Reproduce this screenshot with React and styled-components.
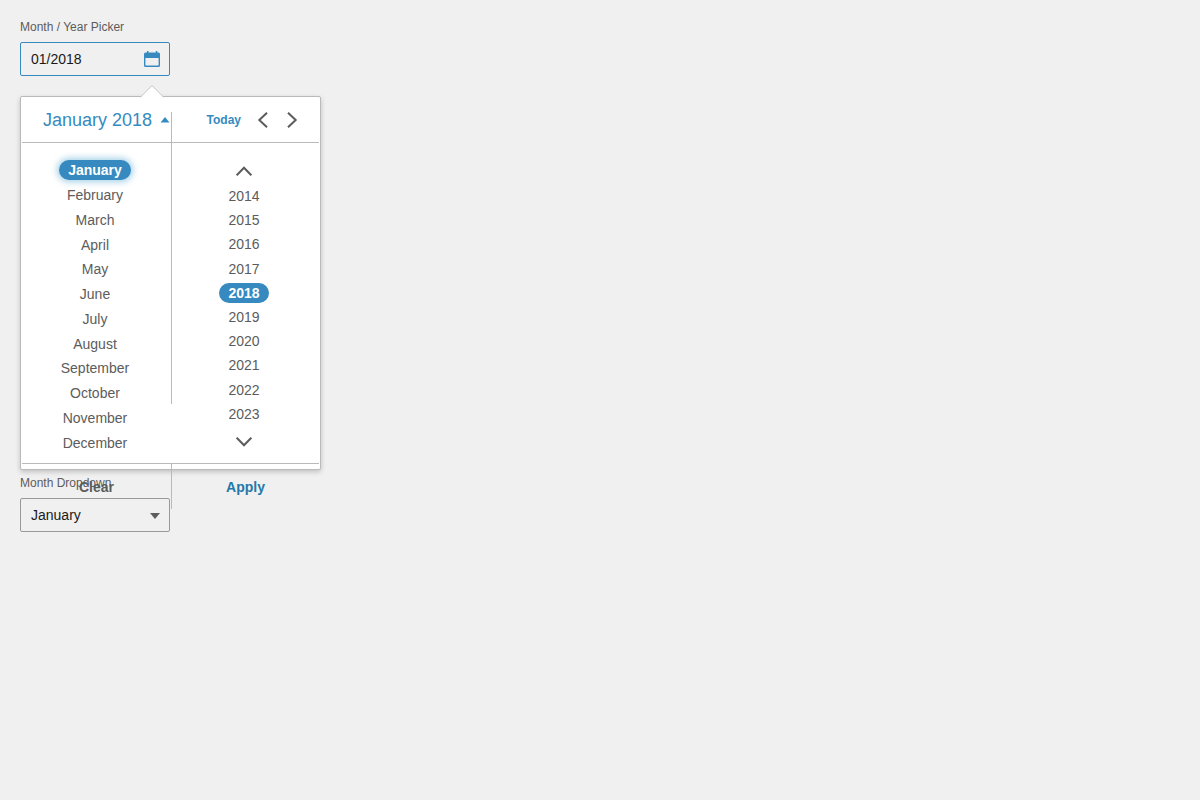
import React, { useState } from "react";
import styled, { createGlobalStyle, css } from "styled-components";

const blue = "#368ac0";
const gray = "#5c5c5c";
const line = "#bababa";

const GlobalStyle = createGlobalStyle`
  *, *::before, *::after { box-sizing: border-box; }
  body {
    margin: 0;
    background: #f0f0f0;
    color: ${gray};
    font-family: "Liberation Sans", Arial, sans-serif;
    font-size: 14px;
  }
  button, input, select { font: inherit; margin: 0; }
`;

const Page = styled.main`
  padding: 20px;
`;

const Field = styled.div`
  display: flex;
  flex-direction: column;
  align-items: flex-start;
  gap: 8px;
`;

const Label = styled.label`
  font-size: 12px;
  line-height: 14px;
`;

const Control = styled.div`
  display: grid;
  width: 150px;
  align-items: center;
  > * { grid-area: 1 / 1; }
`;

const box = css`
  width: 100%;
  height: 34px;
  padding: 0 34px 0 10px;
  border: 1px solid ${(p) => (p.$active ? blue : "#999999")};
  border-radius: 2px;
  background: transparent;
  color: #1a1a1a;
  outline: none;
`;

const TextInput = styled.input`
  ${box}
`;

const Select = styled.select`
  ${box}
  appearance: none;
`;

const Trigger = styled.button`
  justify-self: end;
  display: flex;
  padding: 0;
  margin-right: 9px;
  border: 0;
  background: none;
`;

const SelectArrow = styled.svg`
  justify-self: end;
  margin-right: 10px;
  margin-top: 2px;
  pointer-events: none;
`;

const Popup = styled.section`
  position: relative;
  z-index: 1;
  width: 301px;
  height: 374px;
  margin: 20px 0 6px;
  padding: 0 1px;
  border: 1px solid ${line};
  border-radius: 2px;
  background: #ffffff;
  box-shadow: 0 2px 5px rgba(0, 0, 0, 0.2);
`;

const Tip = styled.svg`
  position: absolute;
  top: -12px;
  left: 119px;
`;

const Divider = styled.span`
  position: absolute;
  top: 15px;
  left: 150px;
  width: 1px;
  height: 292px;
  background: ${line};
`;

const Header = styled.header`
  display: flex;
  align-items: center;
  height: 46px;
  padding: 0 21px;
  border-bottom: 1px solid ${line};
`;

const TitleButton = styled.button`
  display: flex;
  align-items: center;
  gap: 8px;
  padding: 0;
  border: 0;
  background: none;
  color: ${blue};
  font-size: 18px;
  line-height: 22px;
  white-space: nowrap;
`;

const HeaderActions = styled.div`
  display: flex;
  align-items: center;
  gap: 16px;
  margin-left: auto;
`;

const TodayButton = styled.button`
  padding: 0;
  border: 0;
  background: none;
  color: ${blue};
  font-size: 12px;
  font-weight: bold;
`;

const IconButton = styled.button`
  display: flex;
  padding: 0;
  border: 0;
  background: none;
`;

const Steps = styled.div`
  display: flex;
  gap: 17px;
`;

const Lists = styled.div`
  display: grid;
  grid-template-columns: 1fr 1fr;
  column-gap: 3px;
  height: 320px;
  padding: 15px 2px 5px 0;
`;

const MonthList = styled.div`
  display: grid;
  grid-template-rows: repeat(12, 1fr);
  place-items: center;
  padding-bottom: 3px;
`;

const YearColumn = styled.div`
  display: flex;
  flex-direction: column;
  align-items: center;
`;

const YearPager = styled(IconButton)`
  height: ${(p) => (p.$last ? 32 : 26)}px;
  align-items: center;
`;

const YearList = styled.div`
  display: grid;
  grid-template-rows: repeat(10, 1fr);
  place-items: center;
  flex: 1;
`;

const Option = styled.button`
  height: 20px;
  padding: 0 9px;
  border: 0;
  border-radius: 10px;
  outline: none;
  line-height: 20px;
  background: ${(p) => (p.$selected ? blue : "transparent")};
  color: ${(p) => (p.$selected ? "#ffffff" : gray)};
  font-weight: ${(p) => (p.$selected ? "bold" : "normal")};
  box-shadow: ${(p) => (p.$focused ? "0 0 6px 2px rgba(60, 155, 205, 0.45)" : "none")};
`;

const Footer = styled.footer`
  display: grid;
  grid-template-columns: 150px 1fr;
  border-top: 1px solid ${line};
`;

const FooterButton = styled.button`
  height: 45px;
  padding: 0;
  border: 0;
  border-right: ${(p) => (p.$primary ? "0" : `1px solid ${line}`)};
  background: none;
  color: ${(p) => (p.$primary ? "#2578a9" : gray)};
  font-weight: bold;
`;

const MONTHS = [
  "January", "February", "March", "April", "May", "June",
  "July", "August", "September", "October", "November", "December",
];

function Chevron({ points, width, height }) {
  return (
    <svg width={width} height={height} viewBox={`0 0 ${width} ${height}`} aria-hidden="true">
      <polyline points={points} fill="none" stroke={gray} strokeWidth="2" />
    </svg>
  );
}

function CalendarIcon() {
  return (
    <svg width="18" height="18" viewBox="0 0 18 18" aria-hidden="true">
      <path
        fill={blue}
        fillRule="evenodd"
        d="M4 1h1.500v1.500h7.300V1h1.500v1.500h1.200A1.500 1.500 0 0 1 17 4V15.500a1.500 1.500 0 0 1-1.500 1.500h-13A1.500 1.500 0 0 1 1 15.500V4A1.500 1.500 0 0 1 2.500 2.500H4zM2.400 8v7a.6.6 0 0 0 .6.6h12a.6.6 0 0 0 .6-.6V8z"
      />
    </svg>
  );
}

export default function App() {
  const [month, setMonth] = useState(0);
  const [year, setYear] = useState(2018);
  const [firstYear, setFirstYear] = useState(2014);
  const years = Array.from({ length: 10 }, (_, i) => firstYear + i);

  const step = (amount) => {
    const next = year * 12 + month + amount;
    setYear(Math.floor(next / 12));
    setMonth(next % 12);
  };
  const reset = () => {
    setMonth(0);
    setYear(2018);
    setFirstYear(2014);
  };

  return (
    <>
      <GlobalStyle />
      <Page>
        <Field>
          <Label htmlFor="month-year">Month / Year Picker</Label>
          <Control>
            <TextInput id="month-year" $active defaultValue="01/2018" />
            <Trigger type="button" aria-label="Open picker"><CalendarIcon /></Trigger>
          </Control>
        </Field>

        <Popup aria-label="Choose month and year">
          <Tip width="24" height="13" viewBox="0 0 24 13" aria-hidden="true">
            <path d="M0 13L12 0.700l12 12.300" fill="#ffffff" />
            <path d="M0.500 12L12 0.600l11.500 11.400" fill="none" stroke="#c8c8c8" />
          </Tip>
          <Divider />
          <Header>
            <TitleButton type="button">
              {MONTHS[month]} {year}
              <svg width="10" height="6" viewBox="0 0 10 6" aria-hidden="true">
                <path d="M5 0L9.500 5.500h-9z" fill={blue} />
              </svg>
            </TitleButton>
            <HeaderActions>
              <TodayButton type="button" onClick={reset}>Today</TodayButton>
              <Steps>
                <IconButton type="button" aria-label="Previous month" onClick={() => step(-1)}>
                  <Chevron width={12} height={16} points="10,0.700 2.300,8 10,15.300" />
                </IconButton>
                <IconButton type="button" aria-label="Next month" onClick={() => step(1)}>
                  <Chevron width={12} height={16} points="2,0.700 9.700,8 2,15.300" />
                </IconButton>
              </Steps>
            </HeaderActions>
          </Header>
          <Lists>
            <MonthList>
              {MONTHS.map((name, i) => (
                <Option
                  key={name}
                  type="button"
                  $selected={i === month}
                  $focused={i === month}
                  onClick={() => setMonth(i)}
                >
                  {name}
                </Option>
              ))}
            </MonthList>
            <YearColumn>
              <YearPager type="button" aria-label="Earlier years" onClick={() => setFirstYear(firstYear - 10)}>
                <Chevron width={16} height={10} points="0.700,9.300 8,1.700 15.300,9.300" />
              </YearPager>
              <YearList>
                {years.map((y) => (
                  <Option key={y} type="button" $selected={y === year} onClick={() => setYear(y)}>
                    {y}
                  </Option>
                ))}
              </YearList>
              <YearPager $last type="button" aria-label="Later years" onClick={() => setFirstYear(firstYear + 10)}>
                <Chevron width={16} height={10} points="0.700,0.700 8,8.300 15.300,0.700" />
              </YearPager>
            </YearColumn>
          </Lists>
          <Footer>
            <FooterButton type="button" onClick={reset}>Clear</FooterButton>
            <FooterButton type="button" $primary>Apply</FooterButton>
          </Footer>
        </Popup>

        <Field>
          <Label htmlFor="month">Month Dropdown</Label>
          <Control>
            <Select id="month" defaultValue="January">
              {MONTHS.map((name) => <option key={name}>{name}</option>)}
            </Select>
            <SelectArrow width="10" height="6" viewBox="0 0 10 6" aria-hidden="true">
              <path d="M0 0h10L5 6z" fill={gray} />
            </SelectArrow>
          </Control>
        </Field>
      </Page>
    </>
  );
}
